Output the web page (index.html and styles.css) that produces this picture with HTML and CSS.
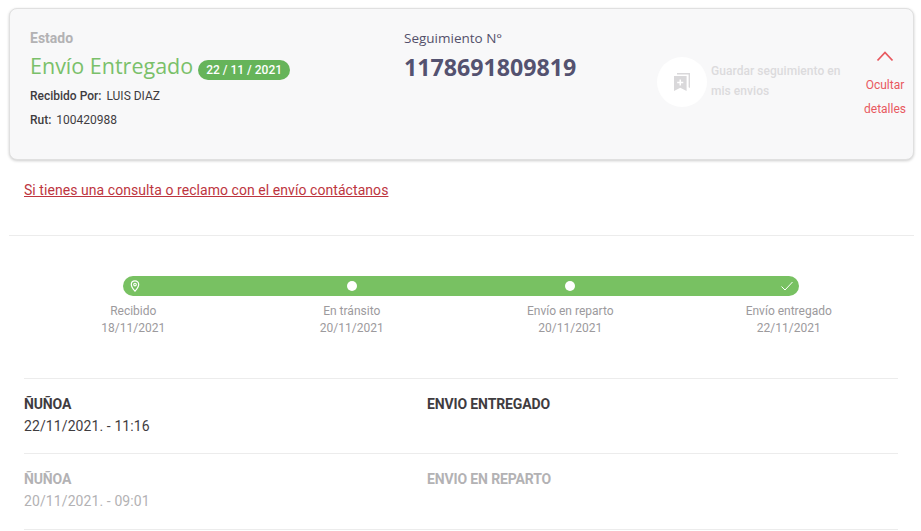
FILE: index.html
```html
<!DOCTYPE html>
<html lang="es">
<head>
<meta charset="utf-8">
<title>Seguimiento</title>
<link rel="stylesheet" href="styles.css">
</head>
<body>
<main class="page">
  <section class="card">
    <div class="status">
      <div class="status-label">Estado</div>
      <div class="status-line"><span class="status-title">Envío Entregado</span><span class="pill">22 / 11 / 2021</span></div>
      <div class="meta"><b>Recibido Por:</b> LUIS DIAZ</div>
      <div class="meta"><b>Rut:</b> 100420988</div>
    </div>
    <div class="tracking">
      <div class="tracking-label">Seguimiento N°</div>
      <div class="tracking-number">1178691809819</div>
    </div>
    <div class="save">
      <div class="save-circle">
        <svg class="save-icon" viewBox="0 0 16 18" width="16" height="18"><path fill="#d9d8da" d="M3 0h13v15l-1.4-.8V1.400H3z"/><path fill="#d9d8da" fill-rule="evenodd" d="M0 3h12.600v15L6.300 14.800 0 18zM5.500 6.500v2.300H3.200v1.500h2.300v2.300H7v-2.300h2.300V8.800H7V6.500z"/></svg>
      </div>
      <div class="save-text">Guardar seguimiento en mis envios</div>
    </div>
    <div class="toggle">
      <svg class="chevron" viewBox="0 0 18 12" width="18" height="12"><path d="M1.500 10.500 9 2.500l7.500 8" fill="none" stroke="#e8595f" stroke-width="1.800"/></svg>
      <div class="toggle-text">Ocultar<br>detalles</div>
    </div>
  </section>
  <a class="contact" href="#">Si tienes una consulta o reclamo con el envío contáctanos</a>
  <hr class="divider">
  <section class="progress">
    <div class="bar">
      <svg class="bar-icon" viewBox="0 0 12 12" width="12" height="12"><path d="M6 .8C3.800.8 2.300 2.500 2.300 4.500 2.300 7 6 11.200 6 11.200S9.700 7 9.700 4.500C9.700 2.500 8.200.8 6 .8z" fill="none" stroke="#fff" stroke-width="1.200"/><circle cx="6" cy="4.600" r="1.300" fill="none" stroke="#fff" stroke-width="1.100"/></svg>
      <span class="bar-dot"></span>
      <span class="bar-dot"></span>
      <svg class="bar-icon" viewBox="0 0 12 12" width="12" height="12"><path d="M.5 6.500 4 10 11.500 2" fill="none" stroke="#fff" stroke-width="1"/></svg>
    </div>
    <div class="steps">
      <div class="step">Recibido<br>18/11/2021</div>
      <div class="step">En tránsito<br>20/11/2021</div>
      <div class="step">Envío en reparto<br>20/11/2021</div>
      <div class="step">Envío entregado<br>22/11/2021</div>
    </div>
  </section>
  <section class="events">
    <div class="event">
      <div><div class="event-title">ÑUÑOA</div><div class="event-date">22/11/2021. - 11:16</div></div>
      <div class="event-title">ENVIO ENTREGADO</div>
    </div>
    <div class="event event-past">
      <div><div class="event-title">ÑUÑOA</div><div class="event-date">20/11/2021. - 09:01</div></div>
      <div class="event-title">ENVIO EN REPARTO</div>
    </div>
  </section>
</main>
</body>
</html>
```
FILE: styles.css
```css
* { box-sizing: border-box; }
html, body { margin: 0; padding: 0; background: #fff; overflow: hidden; }
body { font-family: Roboto, "Liberation Sans", sans-serif; color: #3f3c3f; }
.page { width: 921px; height: 531px; padding: 8px 7px 0 9px; overflow: hidden; }

.card {
  height: 152px;
  display: flex;
  background: #f8f8f9;
  border: 1px solid #e0e0e0;
  border-radius: 8px;
  box-shadow: 0 1px 3px rgba(0,0,0,.2);
  padding: 19px 0 0 20px;
}
.status { width: 374px; flex: none; }
.status-label { font-size: 14px; font-weight: 700; line-height: 20px; color: #b3b2b4; }
.status-line { display: flex; align-items: center; height: 35px; padding-top: 1px; }
.status-title { font-family: "Open Sans", sans-serif; font-size: 21.500px; color: #7ac06a; line-height: 34px; }
.pill {
  margin: 7px 0 0 5px;
  background: #66b45a; color: #fff;
  font-size: 12px; font-weight: 500;
  line-height: 20px; height: 20px; padding: 0 8px;
  border-radius: 10px;
}
.meta { font-size: 12px; line-height: 23.500px; color: #3f3c3f; }
.status-line + .meta { margin-top: 2px; }
.meta b { font-weight: 500; margin-right: 2px; }

.tracking { width: 253px; flex: none; }
.tracking-label { font-family: "Open Sans", sans-serif; font-size: 13.500px; line-height: 20px; color: #54506b; }
.tracking-number { font-family: "Open Sans", sans-serif; font-weight: 700; font-size: 23.200px; line-height: 38px; color: #545270; }

.save { width: 190px; flex: none; display: flex; gap: 4px; padding-top: 29px; }
.save-circle {
  width: 50px; height: 50px; flex: none;
  background: #fff; border-radius: 50%;
  display: flex; align-items: center; justify-content: center;
}
.save-text { font-size: 12px; font-weight: 500; line-height: 20px; color: #dcdbdd; padding-top: 4px; width: 136px; letter-spacing: .05px; }

.toggle { flex: 1; display: flex; flex-direction: column; align-items: center; padding: 22px 0 0 10px; }
.chevron { display: block; }
.toggle-text { font-size: 12px; line-height: 24px; color: #e8595f; text-align: center; margin-top: 11px; }

.contact {
  display: block; margin: 20px 0 0 15px;
  font-size: 14px; line-height: 20px; color: #bd3540;
  text-decoration: underline; letter-spacing: .06px;
}
.divider { border: 0; border-top: 1px solid #ececec; margin: 35px 0 0; }

.progress { padding: 0 16px 0 15px; margin-top: 40px; }
.bar {
  height: 20px; margin: 0 99px;
  background: #78c162; border-radius: 10px;
  display: flex; align-items: center; justify-content: space-between;
  padding: 0 6px;
}
.bar-icon { display: block; }
.bar-dot { width: 10px; height: 10px; background: #fff; border-radius: 50%; margin: 0 1px; }
.steps { display: grid; grid-template-columns: repeat(4, 1fr); margin-top: 7px; }
.step { font-size: 12px; line-height: 17px; color: #9c9a9d; text-align: center; }

.events { padding: 0 16px 0 15px; margin-top: 41px; }
.event {
  display: grid; grid-template-columns: 403px 1fr;
  height: 75px; padding-top: 15px;
  border-top: 1px solid #ececec;
}
.event:last-child { border-bottom: 1px solid #ececec; height: 77px; }
.event-title { font-size: 14px; font-weight: 700; line-height: 20px; color: #3f3c3f; letter-spacing: -.13px; }
.event-date { font-size: 14px; line-height: 24px; color: #3f3c3f; letter-spacing: .1px; }
.event-past .event-title { color: #b3b2b4; }
.event-past .event-date { color: #b3b2b4; }
```
